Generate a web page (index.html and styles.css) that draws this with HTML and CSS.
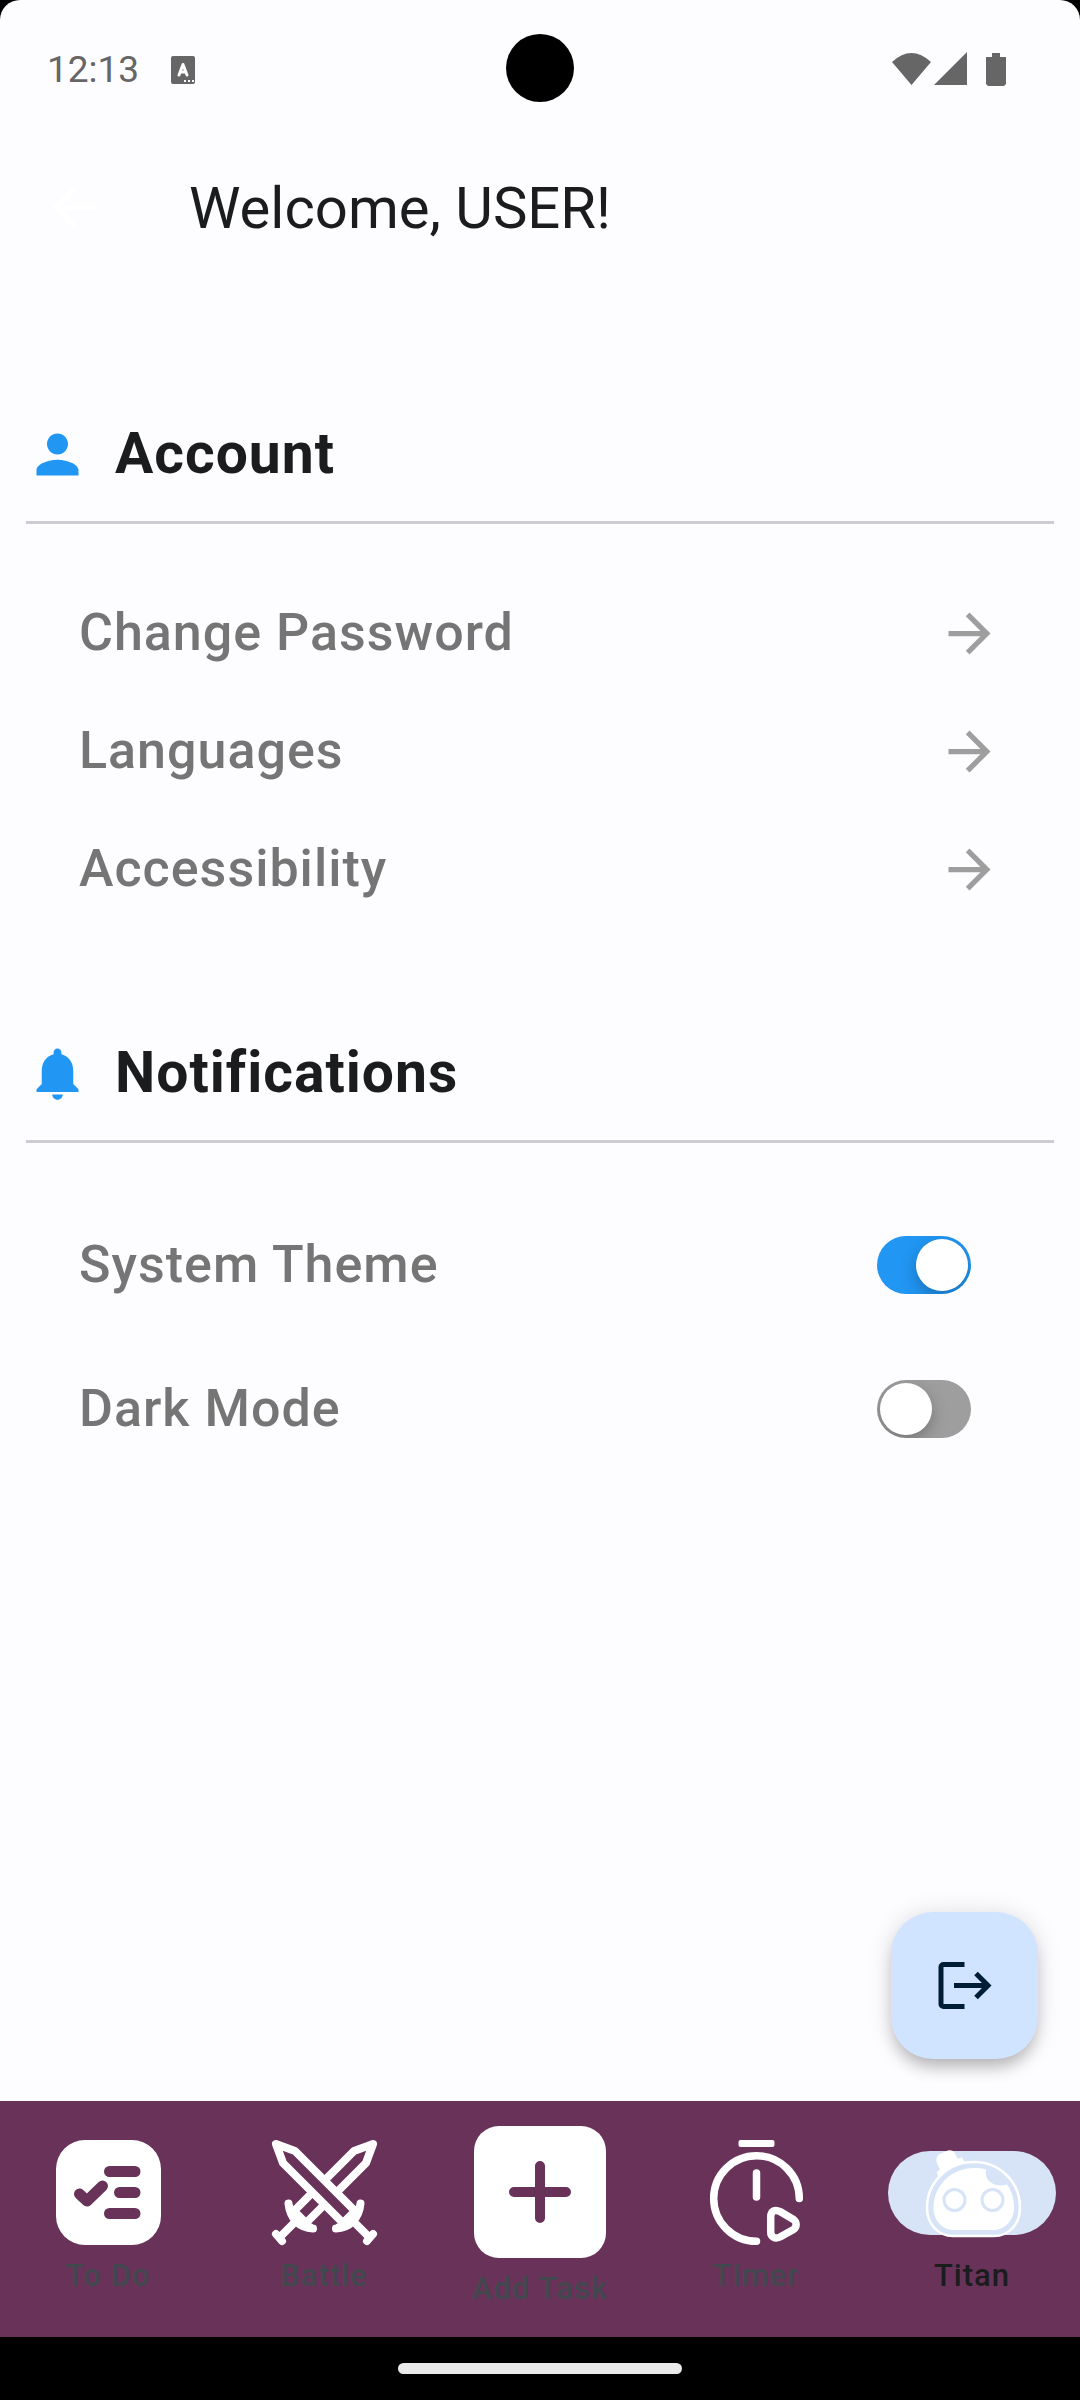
FILE: index.html
```html
<!DOCTYPE html>
<html lang="en">
<head>
<meta charset="utf-8">
<meta name="viewport" content="width=device-width, initial-scale=1">
<title>Settings</title>
<link rel="stylesheet" href="styles.css">
</head>
<body>
<svg class="defs" aria-hidden="true">
  <symbol id="arrow" viewBox="0 0 24 24"><path d="M12 4l-1.41 1.41L16.17 11H4v2h12.17l-5.58 5.59L12 20l8-8z"/></symbol>
</svg>
<div class="screen">
  <header class="status">
    <span class="clock">12:13</span>
    <svg class="status-app" viewBox="0 0 24 28" aria-hidden="true"><rect width="24" height="28" rx="2" fill="#666"/><path d="M8 19L12 8.500L16 19M9.500 16H14.500" fill="none" stroke="#fdfcff" stroke-width="3" stroke-linecap="round" stroke-linejoin="round"/><path d="M13 24h2v2h-2zM17 24h2v2h-2zM21 24h2v2h-2z" fill="#fdfcff"/></svg>
    <span class="camera"></span>
    <svg class="status-icons" viewBox="0 0 116 36" aria-hidden="true"><path d="M0 10Q19.500-8 39 10L19.500 33zM42 33L75 0V33zM94 5h6V1h8V5h6V32l-2 2H96l-2-2z" fill="#666"/></svg>
  </header>
  <div class="appbar">
    <button class="back" type="button" aria-label="Back"><svg class="icon flip"><use href="#arrow"/></svg></button>
    <h1>Welcome, USER!</h1>
  </div>
  <main class="settings">
    <section>
      <h2><svg class="icon" viewBox="0 0 24 24" aria-hidden="true"><path d="M12 12c2.210 0 4-1.790 4-4s-1.790-4-4-4-4 1.790-4 4 1.790 4 4 4zm0 2c-2.670 0-8 1.340-8 4v2h16v-2c0-2.660-5.330-4-8-4z"/></svg>Account</h2>
      <ul>
        <li><a class="row" href="#password">Change Password<svg class="icon"><use href="#arrow"/></svg></a></li>
        <li><a class="row" href="#languages">Languages<svg class="icon"><use href="#arrow"/></svg></a></li>
        <li><a class="row" href="#accessibility">Accessibility<svg class="icon"><use href="#arrow"/></svg></a></li>
      </ul>
    </section>
    <section>
      <h2><svg class="icon" viewBox="0 0 24 24" aria-hidden="true"><path d="M12 22c1.100 0 2-.900 2-2h-4c0 1.100.900 2 2 2zM18 16v-5c0-3.070-1.640-5.640-4.500-6.320V4c0-.830-.670-1.500-1.500-1.500s-1.500.670-1.500 1.500v.680C7.630 5.360 6 7.920 6 11v5l-2 2v1h16v-1z"/></svg>Notifications</h2>
      <ul>
        <li><label class="row tall">System Theme<input class="switch" type="checkbox" role="switch" checked></label></li>
        <li><label class="row tall">Dark Mode<input class="switch" type="checkbox" role="switch"></label></li>
      </ul>
    </section>
    <button class="fab" type="button" aria-label="Log out">
      <svg class="icon" viewBox="0 0 63 63" aria-hidden="true"><path d="M31.500 10.500H10.500a2.500 2.500 0 0 0-2.500 2.500V50a2.500 2.500 0 0 0 2.500 2.500H31.500M21 31.500H54M43 19.500L55 31.500L43 43.500" fill="none" stroke="#001d36" stroke-width="5"/></svg>
    </button>
  </main>
  <nav class="tabs">
    <a class="tab" href="#todo">
      <svg class="tab-icon" viewBox="0 0 105 105" aria-hidden="true"><rect width="105" height="105" rx="29" fill="#fff"/><path d="M53.500 31.500H79M63.500 52.500H79M53.500 73.500H79M23.500 54L31 61L46.500 46" fill="none" stroke="#693359" stroke-width="11" stroke-linecap="round" stroke-linejoin="round"/></svg>
      <span>To Do</span>
    </a>
    <a class="tab" href="#battle">
      <svg class="tab-icon" viewBox="0 0 105 105" aria-hidden="true" fill="none" stroke="#fff" stroke-width="8" stroke-linecap="round" stroke-linejoin="round">
        <path d="M101 4L82 11L22 71L34 83L94 23z" fill="#693359"/>
        <path d="M4 4L23 11L83 71L71 83L11 23z" fill="#693359"/>
        <path d="M88.500 63.500C87 78 78 88 64 88.500M88 66C85 76 77 84 67 87M82 82L97 97M101 94L95 101"/>
        <path d="M16.500 63.500C18 78 27 88 41 88.500M17 66C20 76 28 84 38 87M23 82L8 97M4 94L10 101"/>
      </svg>
      <span>Battle</span>
    </a>
    <a class="tab" href="#add">
      <svg class="tab-icon large" viewBox="0 0 132 132" aria-hidden="true"><rect width="132" height="132" rx="25" fill="#fff"/><path d="M40 66H92M66 40V92" fill="none" stroke="#693359" stroke-width="10" stroke-linecap="round"/></svg>
      <span>Add Task</span>
    </a>
    <a class="tab" href="#timer">
      <svg class="tab-icon" viewBox="0 0 105 105" aria-hidden="true"><rect x="34.500" width="36" height="7" rx="2" fill="#fff"/><path d="M95.300 58.500A42.800 42.800 0 1 0 52.500 101.300M52.500 33V57M66.700 77C66.700 71 71 69 76 71.500L89.500 79.500C93 82 93 87 89.500 89.500L76 97C71 99.500 66.700 97 66.700 92z" fill="none" stroke="#fff" stroke-width="7.500" stroke-linecap="round" stroke-linejoin="round"/></svg>
      <span>Timer</span>
    </a>
    <a class="tab active" href="#titan" aria-current="page">
      <svg class="tab-icon" viewBox="0 0 105 105" aria-hidden="true"><rect x="-32" y="11" width="168" height="84" rx="42" fill="#d7e3f7"/><path d="M7 68C7 42 28 22 54 22C80 22 100 42 100 68C100 84 89 96 74 96H33C18 96 7 84 7 68z" fill="#d7e3f7" stroke="#fff" stroke-width="2.500"/><path d="M13.500 68C13.500 45 32 28 54 28C58 28 62 28.300 66 29.500C64 41 74 48 87 44.500C92 51 94 59 94 68C94 80 85 90 73 90H34C22 90 13.500 80 13.500 68z" fill="#fff"/><g fill="#fff" stroke="#d7e3f7" stroke-width="3"><circle cx="34.500" cy="60" r="10.500"/><circle cx="72.500" cy="60" r="10.500"/></g><path d="M18.500 37L16.500 32.500L20 29.500L16.500 22Q15.500 16 20 14L27 10.700Q32 9.500 34.500 12.500L37.500 18.500L42 17.500L45 22Q28 26 18.500 37z" fill="#fff"/></svg>
      <span>Titan</span>
    </a>
  </nav>
  <footer class="gesture"><span></span></footer>
</div>
</body>
</html>
```
FILE: styles.css
```css
* { box-sizing: border-box; }

body {
  margin: 0;
  background: #000;
  font-family: Roboto, sans-serif;
  color: #1a1c1e;
}

.defs { position: absolute; width: 0; height: 0; }

.screen {
  display: flex;
  flex-direction: column;
  min-height: 100vh;
  background: #fdfcff;
  border-radius: 20px 20px 0 0;
}

.icon {
  width: 63px;
  height: 63px;
  flex: none;
  display: block;
  fill: currentColor;
}
.flip { transform: rotate(180deg); }

/* System status bar */
.status {
  position: relative;
  display: flex;
  align-items: center;
  height: 136px;
  padding: 4px 72px 0 47px;
  color: #666;
}
.clock { font-size: 37px; line-height: 44px; }
.status-app { width: 24px; height: 28px; margin-left: 32px; }
.status-icons { width: 116px; height: 36px; margin-left: auto; }
.camera {
  position: absolute;
  left: 50%;
  top: 50%;
  width: 68px;
  height: 68px;
  border-radius: 50%;
  background: #000;
  transform: translate(-50%, -50%);
}

/* App bar */
.appbar {
  display: flex;
  align-items: center;
  height: 143px;
  padding: 0 42px;
  gap: 84px;
}
.appbar h1 { margin: 0; font-size: 58px; line-height: 74px; font-weight: 400; }

button { border: 0; padding: 0; cursor: pointer; }
.back { background: none; color: #fff; }

/* Settings list */
.settings {
  position: relative;
  flex: 1;
  padding: 138px 26px 200px;
}
.settings section + section { margin-top: 108px; }
.settings h2 {
  display: flex;
  align-items: center;
  gap: 26px;
  margin: 0;
  padding-bottom: 30px;
  border-bottom: 3px solid #cbccd4;
  font-size: 57px;
  line-height: 74px;
  font-weight: 700;
  letter-spacing: 1px;
}
.settings h2 .icon { color: #2196f3; }
.settings ul { margin: 0; padding: 50px 53px 0; list-style: none; }

.row {
  display: flex;
  align-items: center;
  justify-content: space-between;
  height: 118px;
  font-size: 52px;
  line-height: 62px;
  font-weight: 500;
  letter-spacing: 1px;
  color: #757575;
  text-decoration: none;
}
.row.tall { height: 144px; }
.row .icon { color: #9e9e9e; }

.switch {
  appearance: none;
  display: flex;
  align-items: center;
  flex: none;
  width: 94px;
  height: 58px;
  margin: 0 30px 0 0;
  padding: 0 3px;
  border-radius: 29px;
  background: #9e9e9e;
  overflow: hidden;
}
.switch::before {
  content: "";
  width: 52px;
  height: 52px;
  border-radius: 50%;
  background: #fff;
  box-shadow: 0 6px 16px rgba(0, 0, 0, 0.25);
}
.switch:checked { background: #2196f3; justify-content: flex-end; }

.fab {
  position: absolute;
  right: 42px;
  bottom: 42px;
  display: flex;
  align-items: center;
  justify-content: center;
  width: 147px;
  height: 147px;
  border-radius: 42px;
  background: #d1e4ff;
  box-shadow: 0 12px 16px -4px rgba(0, 0, 0, 0.22), 0 2px 24px rgba(0, 0, 0, 0.14);
}

/* Bottom navigation */
.tabs {
  display: grid;
  grid-template-columns: repeat(5, 1fr);
  height: 236px;
  padding-bottom: 2px;
  background: #693359;
}
.tab {
  display: flex;
  flex-direction: column;
  align-items: center;
  justify-content: center;
  gap: 10px;
  font-size: 31px;
  line-height: 42px;
  font-weight: 500;
  letter-spacing: 1px;
  color: #43474e;
  text-decoration: none;
}
.tab.active { color: #1a1c1e; }
.tab-icon { width: 105px; height: 105px; overflow: visible; }
.tab-icon.large { width: 132px; height: 132px; }

.gesture {
  display: flex;
  align-items: center;
  justify-content: center;
  height: 63px;
  background: #000;
}
.gesture span { width: 284px; height: 11px; border-radius: 6px; background: #ebebeb; }
```
